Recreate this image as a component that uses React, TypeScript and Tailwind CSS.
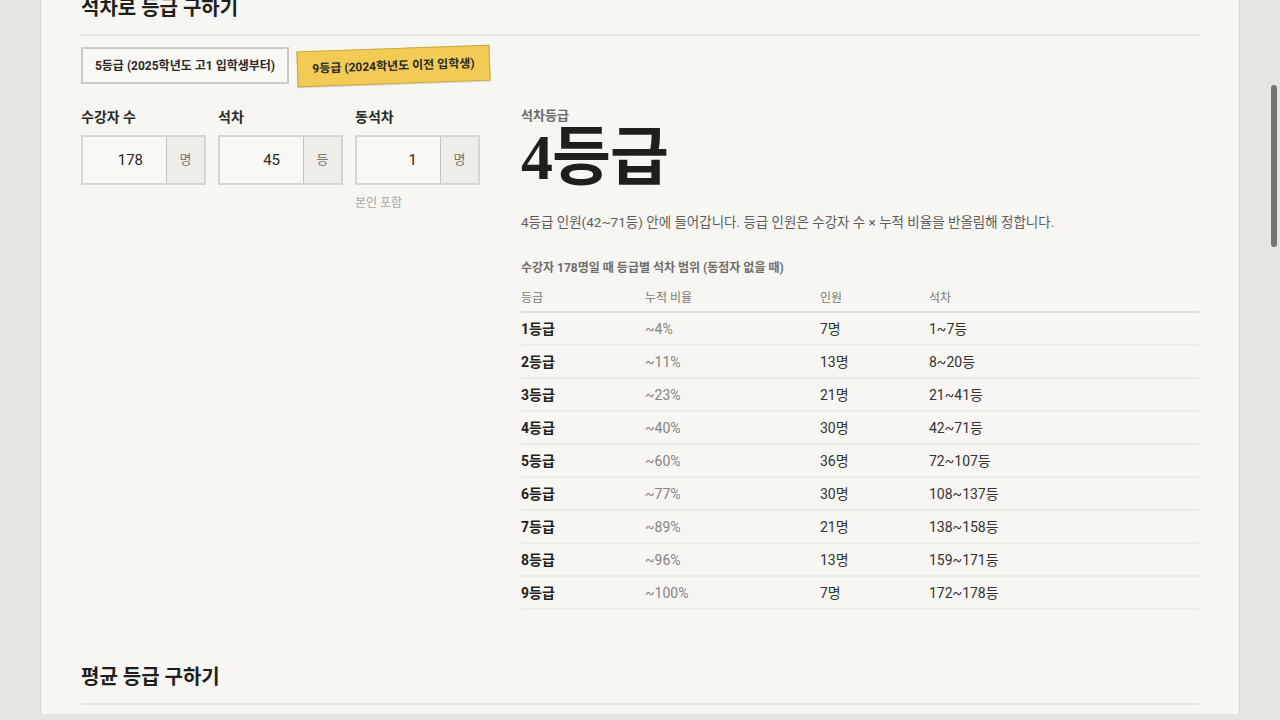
const rows = [
  { grade: '1등급', ratio: '~4%', count: '7명', range: '1~7등' },
  { grade: '2등급', ratio: '~11%', count: '13명', range: '8~20등' },
  { grade: '3등급', ratio: '~23%', count: '21명', range: '21~41등' },
  { grade: '4등급', ratio: '~40%', count: '30명', range: '42~71등' },
  { grade: '5등급', ratio: '~60%', count: '36명', range: '72~107등' },
  { grade: '6등급', ratio: '~77%', count: '30명', range: '108~137등' },
  { grade: '7등급', ratio: '~89%', count: '21명', range: '138~158등' },
  { grade: '8등급', ratio: '~96%', count: '13명', range: '159~171등' },
  { grade: '9등급', ratio: '~100%', count: '7명', range: '172~178등' },
];

const inputs = [
  { label: '수강자 수', value: '178', unit: '명', hint: '' },
  { label: '석차', value: '45', unit: '등', hint: '' },
  { label: '동석차', value: '1', unit: '명', hint: '본인 포함' },
];

function NumberField({ label, value, unit, hint }: { label: string; value: string; unit: string; hint: string }) {
  return (
    <div className="w-[125px]">
      <div className="text-[14px] leading-5 font-bold text-[#2a2a27]">{label}</div>
      <div className="mt-[8px] flex h-[50px] border-2 border-[#d6d5d0] bg-[#f9f8f5]">
        <div className="flex flex-1 items-center justify-end pr-[23px] text-[15px] text-[#2a2a27]">{value}</div>
        <div className="flex w-[38px] items-center justify-center border-l border-[#c4c3be] bg-[#efede8] text-[13px] text-[#77766f]">
          {unit}
        </div>
      </div>
      {hint && <div className="mt-[9px] text-[12px] text-[#a8a7a2]">{hint}</div>}
    </div>
  );
}

export default function App() {
  return (
    <div className="relative h-screen overflow-hidden bg-[#e6e5e0] font-[family-name:Roboto,Noto_Sans_CJK_KR,sans-serif]">
      <div className="ml-10 min-h-full w-[1200px] border-x border-[#d6d5d0] bg-[#f7f6f2] px-10">
        {/* 석차로 등급 구하기 */}
        <h2 className="-mt-[6px] border-b-2 border-[#e6e5e0] pb-3 text-[20px] leading-7 font-bold text-[#1f1f1c]">
          석차로 등급 구하기
        </h2>

        <div className="mt-[11px] flex items-start gap-2">
          <button className="h-[37px] w-[208px] border-2 border-[#cbcac5] bg-[#f9f8f5] text-[12px] font-bold text-[#2a2a27]">
            5등급 (2025학년도 고1 입학생부터)
          </button>
          <button className="mt-[1px] h-[36px] w-[193px] -rotate-2 border border-[#c5a74a] bg-[#f2cb55] text-[12px] font-bold text-[#2a2a27] shadow-[0_1px_1px_rgba(0,0,0,0.15)]">
            9등급 (2024학년도 이전 입학생)
          </button>
        </div>

        <div className="mt-[23px] flex">
          <div className="flex w-[400px] items-start gap-3">
            {inputs.map((f) => (
              <NumberField key={f.label} {...f} />
            ))}
          </div>

          <div className="ml-10 flex-1">
            <div className="mt-[1px] text-[13px] leading-4 font-bold text-[#6b6b66]">석차등급</div>
            <div className="mt-[2px] flex h-[64px] items-baseline text-[64px] leading-[64px] font-bold tracking-[-1px] text-[#1f1f1c]">
              <span className="font-['Liberation_Serif','Times_New_Roman',serif]">4</span>
              <span>등급</span>
            </div>
            <p className="mt-[22px] text-[13.5px] leading-5 text-[#5d5d58]">
              4등급 인원(42~71등) 안에 들어갑니다. 등급 인원은 수강자 수 × 누적 비율을 반올림해 정합니다.
            </p>

            <div className="mt-[28px] text-[12px] leading-4 font-bold text-[#6e6d68]">
              수강자 178명일 때 등급별 석차 범위 (동점자 없을 때)
            </div>

            <table className="mt-[13px] w-full border-collapse text-left">
              <thead>
                <tr className="border-b-2 border-[#dedcd7] text-[12px] text-[#7a7a75]">
                  <th className="w-[124px] pb-[4px] font-normal">등급</th>
                  <th className="w-[175px] pb-[4px] font-normal">누적 비율</th>
                  <th className="w-[109px] pb-[4px] font-normal">인원</th>
                  <th className="pb-[4px] font-normal">석차</th>
                </tr>
              </thead>
              <tbody>
                {rows.map((r) => (
                  <tr key={r.grade} className="h-[33px] border-b-2 border-[#ebeae5] text-[14px]">
                    <td className="pt-[1px] font-bold text-[#1f1f1c]">{r.grade}</td>
                    <td className="pt-[1px] text-[#85847f]">{r.ratio}</td>
                    <td className="pt-[1px] text-[#333330]">{r.count}</td>
                    <td className="pt-[1px] text-[#333330]">{r.range}</td>
                  </tr>
                ))}
              </tbody>
            </table>
          </div>
        </div>

        {/* 평균 등급 구하기 */}
        <h2 className="mt-[53px] border-b-2 border-[#e6e5e0] pb-3 text-[20px] leading-7 font-bold text-[#1f1f1c]">
          평균 등급 구하기
        </h2>
      </div>

      {/* overlay scrollbar */}
      <div className="absolute right-[3px] top-[85px] h-[162px] w-[6px] rounded-full bg-[#75756f]" />
    </div>
  );
}
